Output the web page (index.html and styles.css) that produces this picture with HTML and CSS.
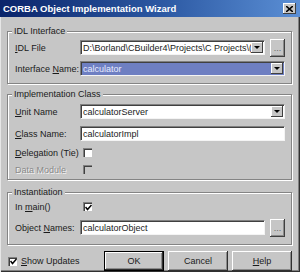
FILE: index.html
```html
<!DOCTYPE html>
<html lang="en">
<head>
    <meta charset="UTF-8">
    <title>CORBA Object Implementation Wizard</title>
    <link rel="stylesheet" href="styles.css">
</head>
<body>
    <div class="window">
        <!-- Barra de título -->
        <div class="titlebar">
            <span class="title">CORBA Object Implementation Wizard</span>
            <span class="close">
                <svg width="7" height="6" viewBox="0 0 7 6"><path d="M0 0 L7 6 M7 0 L0 6" stroke="#000" stroke-width="1.6"/></svg>
            </span>
        </div>

        <div class="content">
            <div class="group g1">
                <div class="group-title">IDL Interface</div>
                <div class="row r-idl">
                    <label><u>I</u>DL File</label>
                    <div class="field combo"><span class="text">D:\Borland\CBuilder4\Projects\C Projects\(</span><span class="arrow"></span></div>
                    <span class="dots">...</span>
                </div>
                <div class="row r-iface">
                    <label>Interface <u>N</u>ame:</label>
                    <div class="field combo selected"><span class="text">calculator</span><span class="arrow"></span></div>
                </div>
            </div>

            <div class="group g2">
                <div class="group-title">Implementation Class</div>
                <div class="row r-unit">
                    <label><u>U</u>nit Name</label>
                    <div class="field combo"><span class="text">calculatorServer</span><span class="arrow"></span></div>
                </div>
                <div class="row r-class">
                    <label><u>C</u>lass Name:</label>
                    <div class="field"><span class="text">calculatorImpl</span></div>
                </div>
                <div class="row check-row r-tie">
                    <label><u>D</u>elegation (Tie)</label>
                    <span class="checkbox"></span>
                </div>
                <div class="row check-row r-data">
                    <label class="disabled">Data Module</label>
                    <span class="checkbox"></span>
                </div>
            </div>

            <div class="group g3">
                <div class="group-title">Instantiation</div>
                <div class="row check-row r-main">
                    <label>In <u>m</u>ain()</label>
                    <span class="checkbox checked">
                        <svg width="7" height="7" viewBox="0 0 7 7"><path d="M0.5 3 L2.5 5.5 L6.5 1" fill="none" stroke="#000" stroke-width="1.5"/></svg>
                    </span>
                </div>
                <div class="row r-obj">
                    <label>Object <u>N</u>ames:</label>
                    <div class="field"><span class="text">calculatorObject</span></div>
                    <span class="dots">...</span>
                </div>
            </div>

            <!-- Rodapé com botões -->
            <div class="footer">
                <div class="show">
                    <span class="checkbox checked">
                        <svg width="7" height="7" viewBox="0 0 7 7"><path d="M0.5 3 L2.5 5.5 L6.5 1" fill="none" stroke="#000" stroke-width="1.5"/></svg>
                    </span>
                    <span><u>S</u>how Updates</span>
                </div>
                <div class="buttons">
                    <span class="button default">OK</span>
                    <span class="button">Cancel</span>
                    <span class="button"><u>H</u>elp</span>
                </div>
            </div>
        </div>
    </div>
</body>
</html>
```

FILE: styles.css
```css
body {
    margin: 0;
    padding: 0;
    font-family: "Liberation Sans", Arial, sans-serif;
    font-size: 9px;
    color: #1a1a1a;
    background-color: #c6c6c6;
}
.window {
    width: 300px;
    height: 272px;
    box-sizing: border-box;
    background-color: #c6c6c6;
    box-shadow: inset 1px 0 #e6e6e6, inset -1px -1px #303030, inset -2px -2px #808080;
    overflow: hidden;
}
/* Barra de título */
.titlebar {
    height: 17px;
    display: flex;
    align-items: center;
    justify-content: space-between;
    padding: 0 4px 0 3px;
    background: linear-gradient(to right, #0a246a, #2d5aa4 55%, #5b8fd5);
    color: #fff;
    font-weight: bold;
    font-size: 9.5px;
}
.close {
    width: 13px;
    height: 11px;
    box-sizing: border-box;
    display: flex;
    align-items: center;
    justify-content: center;
    background-color: #c6c6c6;
    box-shadow: inset -1px -1px #404040, inset 1px 1px #fff;
}
.content {
    padding: 14px 8px 0 7px;
}
/* Caixas de grupo */
.group {
    border: 1px solid #848484;
    box-shadow: inset 1px 1px #fff, 1px 1px #fff;
    padding: 0 6px 7px 7px;
}
.group-title {
    width: max-content;
    margin: -7px 0 0 -3px;
    padding: 0 2px;
    line-height: 13px;
    background-color: #c6c6c6;
}
.g2 {
    margin-top: 10px;
    padding-bottom: 3px;
}
.g3 {
    margin-top: 12px;
    padding-bottom: 9px;
}
.row {
    display: flex;
    align-items: center;
    height: 15px;
}
.row label {
    width: 65px;
    flex: none;
    white-space: nowrap;
}
.check-row {
    height: 13px;
}
.check-row label {
    width: 68px;
}
.r-idl { margin-top: 2px; }
.r-iface { margin-top: 6px; }
.r-unit { margin-top: 3px; }
.r-class { margin-top: 7px; }
.r-tie { margin-top: 5px; }
.r-data { margin-top: 4px; }
.r-main { margin-top: 1px; }
.r-obj { margin-top: 7px; }
.disabled {
    color: #8a8a8a;
    text-shadow: 1px 1px #f4f4f4;
}
/* Campos de texto */
.field {
    flex: 1;
    height: 15px;
    box-sizing: border-box;
    display: flex;
    align-items: center;
    padding-left: 2px;
    background-color: #fff;
    border-top: 1px solid #808080;
    border-left: 1px solid #808080;
    border-bottom: 1px solid #f4f4f4;
    border-right: 1px solid #f4f4f4;
    box-shadow: inset 1px 1px #404040;
    overflow: hidden;
    white-space: nowrap;
}
.field .text {
    flex: 1;
    overflow: hidden;
}
.selected {
    background-color: #6e7fc2;
    color: #e8ecff;
}
.arrow {
    flex: none;
    width: 12px;
    height: 11px;
    margin-right: 1px;
    box-sizing: border-box;
    background-color: #c6c6c6;
    box-shadow: inset -1px -1px #404040, inset 1px 1px #fff;
    position: relative;
}
.arrow::after {
    content: "";
    position: absolute;
    left: 3px;
    top: 4px;
    border-left: 3px solid transparent;
    border-right: 3px solid transparent;
    border-top: 3px solid #000;
}
.dots {
    flex: none;
    width: 15px;
    height: 18px;
    margin-left: 5px;
    box-sizing: border-box;
    display: flex;
    align-items: flex-end;
    justify-content: center;
    padding-bottom: 4px;
    font-size: 9px;
    line-height: 9px;
    color: #6a6a6a;
    background-color: #c6c6c6;
    box-shadow: inset -1px -1px #404040, inset 1px 1px #fff, inset -2px -2px #8a8a8a;
}
/* Caixas de seleção */
.checkbox {
    width: 9px;
    height: 9px;
    box-sizing: border-box;
    display: flex;
    align-items: center;
    justify-content: center;
    background-color: #fff;
    border-top: 1px solid #808080;
    border-left: 1px solid #808080;
    box-shadow: inset 1px 1px #404040;
}
.r-data .checkbox {
    background-color: #c6c6c6;
}
/* Rodapé */
.footer {
    display: flex;
    align-items: center;
    height: 20px;
    margin-top: 6px;
}
.show {
    display: flex;
    align-items: center;
    gap: 4px;
    margin-left: 1px;
}
.buttons {
    display: flex;
    gap: 4px;
    margin-left: auto;
}
.button {
    width: 60px;
    height: 20px;
    box-sizing: border-box;
    display: flex;
    align-items: center;
    justify-content: center;
    background-color: #c6c6c6;
    box-shadow: inset -1px -1px #303030, inset 1px 1px #fff, inset -2px -2px #8a8a8a;
}
.button.default {
    border: 1px solid #000;
}
```
